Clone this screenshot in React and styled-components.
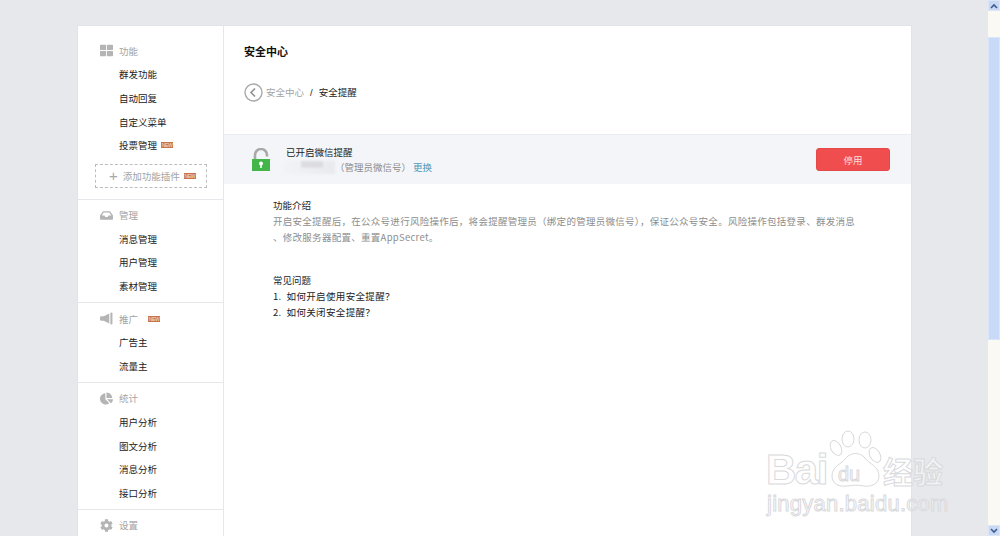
import React from 'react';
import styled, { createGlobalStyle } from 'styled-components';
import { FaThLarge, FaInbox, FaChartPie, FaCog } from 'react-icons/fa';

const colors = {
  page: '#e7e8eb',
  line: '#e7e7eb',
  band: '#f4f5f9',
  grey: '#a3a3a3',
  icon: '#b4b4b4',
  text: '#222222',
  body: '#8d8d8d',
  red: '#f04e4e',
  badge: '#c9744a',
  mark: '#d9d9dc',
};

const GlobalStyle = createGlobalStyle`
  html, body {
    margin: 0;
    height: 100%;
    overflow: hidden;
    background: ${colors.page};
    font-family: "Noto Sans CJK SC", "Liberation Sans", sans-serif;
  }
`;

const Page = styled.div`
  position: relative;
  display: flex;
  width: 1000px;
  height: 536px;
  overflow: hidden;
`;

const Main = styled.div`
  flex: 1;
  padding: 26px 77px 0 78px;
  overflow: hidden;
`;

const Card = styled.div`
  display: flex;
  height: 540px;
  background: #fff;
  box-shadow: 0 0 0 1px #e2e3e6;
`;

const Sidebar = styled.nav`
  flex: none;
  width: 145px;
  border-right: 1px solid ${colors.line};
`;

const Section = styled.section`
  padding: ${props => (props.first ? '13px 0 4px' : '3.5px 0 4.5px')};
  border-bottom: ${props => (props.last ? 'none' : `1px solid ${colors.line}`)};
`;

const SectionHead = styled.div`
  display: flex;
  align-items: center;
  height: 23.6px;
  padding-left: 22px;
  font-size: 9.5px;
  color: ${colors.grey};

  svg {
    flex: none;
    width: 13px;
    height: 13px;
    margin-right: 6px;
    color: ${colors.icon};
  }
`;

const Item = styled.div`
  display: flex;
  align-items: center;
  height: 23.6px;
  padding-left: 41px;
  font-size: 9.5px;
  color: ${colors.text};
`;

const Badge = styled.span`
  display: inline-block;
  width: 12px;
  height: 6px;
  margin-left: ${props => props.gap || 4}px;
  background: ${colors.badge};
  color: #f6e2d5;
  font: 5px/6px "Liberation Sans", sans-serif;
  letter-spacing: -0.3px;
  text-align: center;
  overflow: hidden;
`;

const AddPlugin = styled.div`
  display: flex;
  align-items: center;
  box-sizing: border-box;
  width: 112px;
  height: 24px;
  margin: 7px 0 7px 17px;
  padding-left: 13px;
  border: 1px dashed #bdbdbd;
  font-size: 9.5px;
  color: ${colors.grey};
`;

const Plus = styled.span`
  margin-right: 5px;
  font: 15px/1 "Liberation Sans", sans-serif;
  color: #a8a8a8;
`;

const Content = styled.main`
  flex: 1;
  min-width: 0;
`;

const Title = styled.h2`
  margin: 0;
  padding: 17px 0 0 20px;
  font-size: 11px;
  line-height: 16px;
  font-weight: 700;
  color: #111;
`;

const Crumbs = styled.div`
  display: flex;
  align-items: center;
  height: 18px;
  margin-top: 24px;
  padding-left: 20px;
  font-size: 9.5px;
  color: ${colors.text};
`;

const BackIcon = styled.svg`
  width: 19px;
  height: 19px;
  margin-right: 3px;
`;

const CrumbLink = styled.span`
  color: ${colors.grey};
`;

const CrumbSep = styled.span`
  margin: 0 6px;
  font-family: "Liberation Sans", sans-serif;
`;

const Band = styled.div`
  display: flex;
  align-items: center;
  box-sizing: border-box;
  height: 50px;
  margin-top: 33px;
  padding: 0 21px 0 28px;
  background: ${colors.band};
  border-top: 1px solid #ebecef;
`;

const LockIcon = styled.svg`
  flex: none;
  width: 18px;
  height: 24px;
  margin-right: 16px;
`;

const BandText = styled.div`
  flex: 1;
  font-size: 9.5px;
  line-height: 15px;
  color: ${colors.text};
`;

const AccountRow = styled.div`
  display: flex;
  align-items: center;
  color: ${colors.body};
`;

const Masked = styled.span`
  display: inline-block;
  width: 52px;
  height: 13px;
  margin: 0 0 0 -3px;
  background:
    linear-gradient(180deg, #dcdce0 0%, #dcdce0 45%, transparent 55%) 18px 0 / 22px 100% no-repeat,
    linear-gradient(90deg, #f2f3f6 0%, #eeeff2 50%, #e8e9ec 100%);
  filter: blur(1px);
`;

const Change = styled.a`
  margin-left: 2px;
  color: #4b9bb8;
`;

const DisableButton = styled.button`
  width: 74px;
  height: 23px;
  padding: 0;
  border: 1px solid #e44848;
  border-radius: 3px;
  background: ${colors.red};
  color: #fbdcdc;
  font-family: inherit;
  font-size: 9.5px;
`;

const Article = styled.article`
  width: 600px;
  padding: 14px 0 0 49px;
  font-size: 9.5px;
  line-height: 15.8px;
  color: ${colors.text};
`;

const Body = styled.p`
  margin: 0 0 28px;
  color: ${colors.body};
  letter-spacing: 0.28px;
`;

const Question = styled.div`
  letter-spacing: 0.35px;
`;

const Watermark = styled.div`
  position: absolute;
  left: 766px;
  top: 428px;
  width: 190px;
  height: 90px;
  color: rgba(255, 255, 255, 0.45);
  -webkit-text-stroke: 1px ${colors.mark};
  font-family: "Liberation Sans", sans-serif;
  pointer-events: none;
`;

const MarkBai = styled.span`
  position: absolute;
  left: 0;
  top: 22px;
  font-size: 42px;
  line-height: 40px;
  font-weight: 700;
  letter-spacing: -1.5px;
`;

const MarkDu = styled.span`
  position: absolute;
  left: 72px;
  top: 35px;
  font-size: 20px;
  line-height: 22px;
`;

const MarkJing = styled.span`
  position: absolute;
  left: 117px;
  top: 24px;
  font-family: "Noto Sans CJK SC", sans-serif;
  font-size: 30px;
  line-height: 36px;
  font-weight: 700;
`;

const MarkUrl = styled.span`
  position: absolute;
  left: 1px;
  top: 64px;
  font-size: 22px;
  line-height: 24px;
  letter-spacing: 0.25px;
`;

const Paw = styled.svg`
  position: absolute;
  left: 62px;
  top: 2px;
  width: 54px;
  height: 58px;
`;

const Scrollbar = styled.div`
  display: flex;
  flex: none;
  flex-direction: column;
  width: 12px;
  background: #faf9f3;
`;

const ScrollButton = styled.div`
  display: flex;
  flex: none;
  align-items: center;
  justify-content: center;
  height: 11px;
  background: #c9d9f3;
  border: 1px solid #dbe5f6;
  box-sizing: border-box;
`;

const ScrollGap = styled.div`
  flex: none;
  height: 26px;
`;

const ScrollThumb = styled.div`
  flex: none;
  height: 303px;
  background: #c8daf8;
  border: 1px solid #d9e5f9;
  box-sizing: border-box;
`;

const Spacer = styled.div`
  flex: 1;
`;

const HornIcon = () => (
  <svg viewBox="0 0 14 14" fill="currentColor">
    <path d="M1.5 4.5H4L10 1.5v11L4 9.5H1.5A1.5 1.5 0 0 1 0 8V6a1.5 1.5 0 0 1 1.5-1.5Z" />
    <rect x="11.2" y="0.5" width="2.2" height="13" rx="1.1" />
  </svg>
);

const navSections = [
  {
    title: '功能',
    icon: <FaThLarge />,
    items: [{ name: '群发功能' }, { name: '自动回复' }, { name: '自定义菜单' }, { name: '投票管理', isNew: true }],
    plugin: true,
  },
  { title: '管理', icon: <FaInbox />, items: [{ name: '消息管理' }, { name: '用户管理' }, { name: '素材管理' }] },
  { title: '推广', icon: <HornIcon />, isNew: true, items: [{ name: '广告主' }, { name: '流量主' }] },
  {
    title: '统计',
    icon: <FaChartPie />,
    items: [{ name: '用户分析' }, { name: '图文分析' }, { name: '消息分析' }, { name: '接口分析' }],
  },
  { title: '设置', icon: <FaCog />, items: [] },
];

const Arrow = ({ d }) => (
  <svg width="8" height="6" viewBox="0 0 8 6">
    <path d={d} fill="none" stroke="#3e5c94" strokeWidth="1.6" />
  </svg>
);

const App = () => (
  <Page>
    <GlobalStyle />
    <Main>
      <Card>
        <Sidebar>
          {navSections.map((section, index) => (
            <Section key={section.title} first={index === 0} last={index === navSections.length - 1}>
              <SectionHead>
                {section.icon}
                {section.title}
                {section.isNew && <Badge gap={10}>NEW</Badge>}
              </SectionHead>
              {section.items.map(item => (
                <Item key={item.name}>
                  {item.name}
                  {item.isNew && <Badge>NEW</Badge>}
                </Item>
              ))}
              {section.plugin && (
                <AddPlugin>
                  <Plus>+</Plus>
                  添加功能插件
                  <Badge>NEW</Badge>
                </AddPlugin>
              )}
            </Section>
          ))}
        </Sidebar>
        <Content>
          <Title>安全中心</Title>
          <Crumbs>
            <BackIcon viewBox="0 0 19 19">
              <circle cx="9.5" cy="9.5" r="8.5" fill="none" stroke="#a9a9a9" strokeWidth="1.4" />
              <path d="M11 5.5 7 9.5l4 4" fill="none" stroke="#8f8f8f" strokeWidth="1.6" />
            </BackIcon>
            <CrumbLink>安全中心</CrumbLink>
            <CrumbSep>/</CrumbSep>
            安全提醒
          </Crumbs>
          <Band>
            <LockIcon viewBox="0 0 18 24">
              <path d="M3 11V7a6 6 0 0 1 12 0v1.5" fill="none" stroke="#a9a9a9" strokeWidth="2.6" />
              <rect x="0" y="11" width="18" height="12" fill="#44b549" />
              <circle cx="9" cy="15.5" r="2" fill="#fff" />
              <rect x="8.2" y="16" width="1.6" height="4" fill="#fff" />
            </LockIcon>
            <BandText>
              已开启微信提醒
              <AccountRow>
                <Masked />
                （管理员微信号）
                <Change>更换</Change>
              </AccountRow>
            </BandText>
            <DisableButton>停用</DisableButton>
          </Band>
          <Article>
            功能介绍
            <Body>
              开启安全提醒后，在公众号进行风险操作后，将会提醒管理员（绑定的管理员微信号），保证公众号安全。风险操作包括登录、群发消息
              <br />
              、修改服务器配置、重置AppSecret。
            </Body>
            常见问题
            <Question>1.&nbsp;&nbsp;如何开启使用安全提醒？</Question>
            <Question>2.&nbsp;&nbsp;如何关闭安全提醒？</Question>
          </Article>
        </Content>
      </Card>
    </Main>
    <Scrollbar>
      <ScrollButton>
        <Arrow d="M1 5 4 2l3 3" />
      </ScrollButton>
      <ScrollGap />
      <ScrollThumb />
      <Spacer />
      <ScrollButton>
        <Arrow d="M1 1l3 3 3-3" />
      </ScrollButton>
    </Scrollbar>
    <Watermark>
      <Paw viewBox="0 0 54 58" fill="rgba(255,255,255,0.45)" stroke={colors.mark} strokeWidth="1">
        <ellipse cx="8" cy="18" rx="5" ry="8" transform="rotate(-30 8 18)" />
        <ellipse cx="20" cy="9" rx="6" ry="8" />
        <ellipse cx="37" cy="10" rx="6" ry="8" />
        <ellipse cx="47" cy="25" rx="5" ry="8" transform="rotate(-30 47 25)" />
        <path d="M4 46c0-10 10-12 14-18 5-6 14-6 19 0 4 6 14 8 14 18 0 8-8 11-15 10-6-1-10-1-17 0-8 1-15-2-15-10Z" />
      </Paw>
      <MarkBai>Bai</MarkBai>
      <MarkDu>du</MarkDu>
      <MarkJing>经验</MarkJing>
      <MarkUrl>jingyan.baidu.com</MarkUrl>
    </Watermark>
  </Page>
);

export default App;
